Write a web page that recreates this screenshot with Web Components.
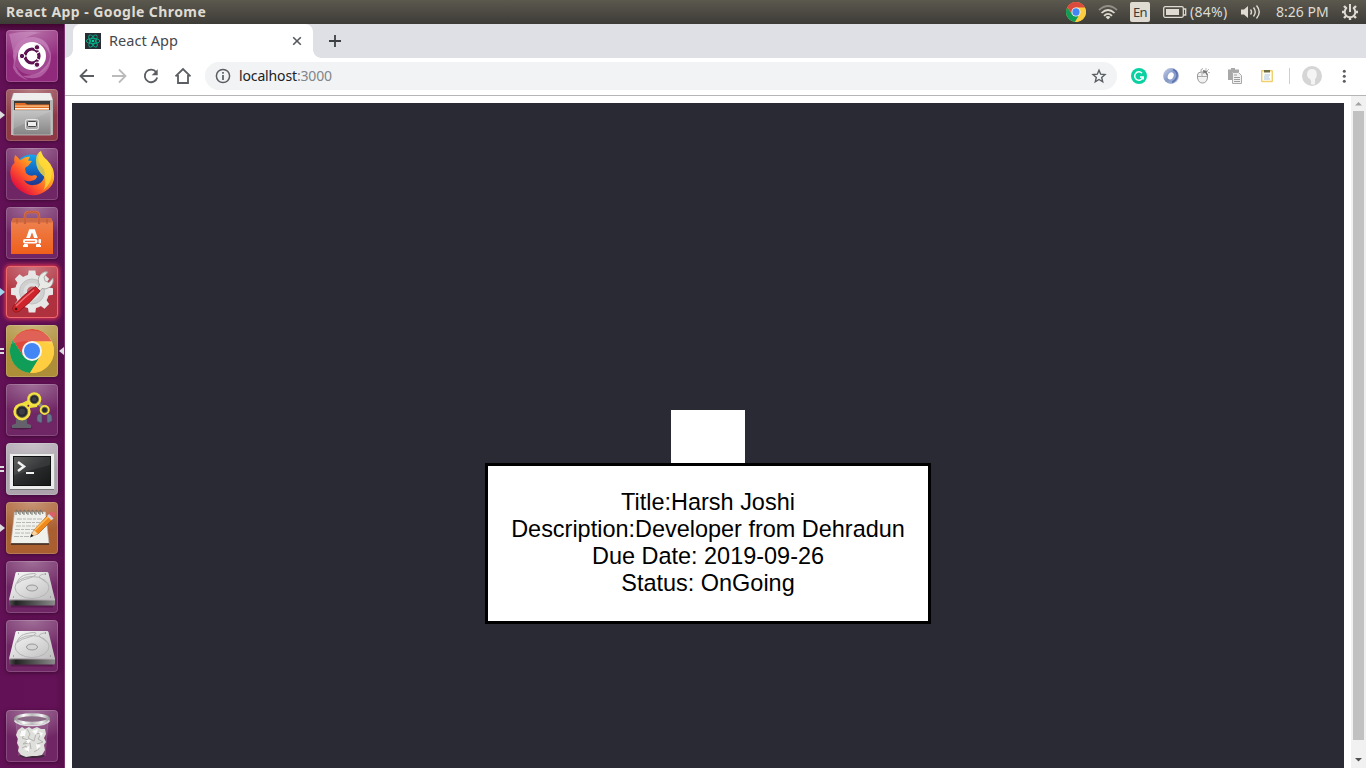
<!DOCTYPE html>
<html lang="en">
<head>
<meta charset="utf-8">
<title>React App</title>
<style>
html,body{margin:0;width:1366px;height:768px;overflow:hidden}
body{font-family:"Noto Sans","Open Sans",sans-serif}
</style>
</head>
<body>
<desk-shell>
  <top-panel slot="panel">React App - Google Chrome</top-panel>
  <dock-launcher slot="dock"></dock-launcher>
  <browser-window slot="window">
    <browser-tab slot="tab">React App</browser-tab>
    <tool-bar slot="toolbar"></tool-bar>
    <task-page slot="page">
      <task-card>
        <span>Title:Harsh Joshi</span>
        <span>Description:Developer from Dehradun</span>
        <span>Due Date: 2019-09-26</span>
        <span>Status: OnGoing</span>
      </task-card>
    </task-page>
    <scroll-bar slot="scroll"></scroll-bar>
  </browser-window>
</desk-shell>
<script>
const define = (name, html) => customElements.define(name, class extends HTMLElement {
  constructor() {
    super();
    this.attachShadow({mode: 'open'});
  }
  connectedCallback() {
    this.shadowRoot.innerHTML = typeof html === 'function' ? html(this) : html;
  }
});

const chromeBall = `
<circle cx="24" cy="24" r="22" fill="#fdd043"/>
<path d="M4.900 13A22 22 0 0 0 22 45.900L32.500 28.500 24 24 15.500 29Z" fill="#109d58"/>
<path d="M43.500 14.200H24V24L32.600 29 22 45.900A22 22 0 0 0 43.500 14.200Z" fill="#fecd40"/>
<path d="M4.900 13A22 22 0 0 1 43.600 14.200H24L15.400 29Z" fill="#dc4a3d"/>
<circle cx="24" cy="24" r="10" fill="#f5f5f5"/><circle cx="24" cy="24" r="8" fill="#4285f4"/>`;

const disk = `<defs><linearGradient id="d" x2="1" y2="1"><stop stop-color="#fafafa"/><stop offset="1" stop-color="#bdbdbd"/></linearGradient><linearGradient id="e"><stop stop-color="#555"/><stop offset=".15" stop-color="#222"/><stop offset="1" stop-color="#8b8b8b"/></linearGradient></defs>
<path d="M5 45h42" stroke="#2a0624" stroke-width="3" opacity=".35"/>
<path d="M11 11h30q1.200 0 1.500 1.200L49 38.500H3L9.500 12.200Q9.800 11 11 11Z" fill="url(#d)"/><path d="M3 38.500h46v4.500q0 1.500-1.500 1.500h-43Q3 44.500 3 43Z" fill="url(#e)"/><path d="M3 38.800h46" stroke="#eee" stroke-width=".8"/>
<ellipse cx="26" cy="26.500" rx="17" ry="11" fill="none" stroke="#b4b4b4"/><path d="M11 22Q13 15 21 13.500q9-2 9 0-3 3-8 4-6 1-11 5M40 13q-6 0-7 3l8 6" fill="none" stroke="#b5b5b5"/>
<ellipse cx="26" cy="27" rx="5.500" ry="3" fill="#d4d4d4" stroke="#999"/><path d="M7 36h1M44 36h1M12 13h1M39 13h1" stroke="#777"/>`;

const gearTeeth = [0,45,90,135,180,225,270,315].map(a => `<path d="m21.500 12 1.200-7.500h6.600l1.200 7.500Z" transform="rotate(${a} 26 25.500)"/>`).join('');

const paper = `<path d="m12 20 4-3 3 2 4-2 3 2 5-2 4 2 4 0 1 5-2 4 2 4-2 3 1 5-3 5-5 1-5 0-6 1-5-2-3-4 1-4-2-4 1-4-2-4Z" fill="#dfdfdc"/>
<path d="m14 22 5 2-3 4 6 2-5 4 7-1 1 6M21 19l3 5-2 4 6 3 2-7M29 23l6 1-3 5 5 3-6 2 2 5-5 3M16 38l4-2 2 6" fill="none" stroke="#aeaeac" stroke-width=".9"/>
<path d="m15 21 5-1-1 6-5 0ZM26 21l6-2-2 6ZM18 39l5-3 0 6ZM30 34l5 1-4 5ZM33 22l4 1-2 4ZM20 30l5 0-3 4Z" fill="#fbfbfb"/>`;

const appArt = {
  dash: `<circle cx="26" cy="26" r="19" fill="#b86aab" opacity=".45"/>
<path d="M3 4Q20 0 36 3 14 4 8 28 6 14 3 4ZM7 26Q12 6 28 7 44 9 44 26 40 12 26 12 12 13 9 33ZM44 20Q48 38 34 47 24 50 16 46 32 46 38 38 45 32 44 20ZM8 30Q10 44 22 50 12 48 7 38Z" fill="#e0addb" opacity=".38"/>
<circle cx="26" cy="26" r="14" fill="#fff"/><circle cx="26" cy="26" r="7" fill="none" stroke="#5e1150" stroke-width="3.200"/><path d="m26 26 10.500-6M26 26l10.500 6M26 26H14" stroke="#fff" stroke-width="1.200"/><circle cx="26" cy="26" r="5" fill="#fff"/><g fill="#5e1150" stroke="#fff"><circle cx="16" cy="26" r="2.700"/><circle cx="31" cy="17.300" r="2.700"/><circle cx="31" cy="34.700" r="2.700"/></g>`,
  files: `<defs><linearGradient id="f" x2="0" y2="1"><stop stop-color="#bcbcbc"/><stop offset="1" stop-color="#858585"/></linearGradient></defs>
<path d="M7 4h38l2 7v35H5V11Z" fill="#b5b5b5"/><path d="M8 4h36l2.500 7h-41Z" fill="#eee"/><path d="M8 12h36v12H8Z" fill="#3c3a38"/><path d="M9 14h10l2 1.500h22V21H9Z" fill="#e16b22"/><path d="M9 16.500h34v1.200H9z" fill="#f8c58c"/><path d="M9 19h34v1.500H9z" fill="#fff1df"/>
<path d="M7 21.500h38V46H7Z" fill="url(#f)" stroke="#cdcdcd" stroke-width=".7"/><path d="M7 22h38L7 40Z" fill="#fff" opacity=".12"/><rect x="19.500" y="30.500" width="13" height="10" rx="2" fill="#aaa" stroke="#e7e7e7"/><rect x="21.500" y="32.500" width="9" height="5" rx="1" fill="#eee" stroke="#444"/>`,
  firefox: `<defs><linearGradient id="g" x1=".85" y1=".05" x2=".15" y2=".8"><stop stop-color="#fff44f"/><stop offset=".35" stop-color="#ffb01f"/><stop offset=".7" stop-color="#ff582c"/><stop offset="1" stop-color="#e5153d"/></linearGradient><linearGradient id="b" x2="0" y2="1"><stop stop-color="#18a5f3"/><stop offset=".6" stop-color="#1058b5"/><stop offset="1" stop-color="#2a2e80"/></linearGradient></defs>
<circle cx="25" cy="23" r="16.500" fill="url(#b)"/>
<path d="M9 7q3 2 5 5l1-.5q4-3 9-3l-2 4 4 .5-4 5q-3 1-3 3l1 4q3 4 9 2l2 1q0 4-6 5-4 1-7-1 3 6 10 5 7 0 10-7 2-6-1-10-7-6-4-15 1-1 2-2 1 5 6 9 4 4 6 9 4 14-6 21Q28 52 15 43 3 35 4.500 22q1-5 4-7-1-4 .5-8Z" fill="url(#g)"/>
<path d="M30 12q0-6 4.500-9 0 5 7 10 5 7 4 16-1 7-8 13 3-6 1-13-9-7-8.500-17Z" fill="#ffdc38" opacity=".8"/>`,
  software: `<defs><linearGradient id="s" x2="0" y2="1"><stop stop-color="#ee8452"/><stop offset="1" stop-color="#ef5f1b"/></linearGradient></defs><path d="M7 11h38l2 4v32H5V15Z" fill="url(#s)"/><path d="M7 11h38l2 4.500H5Z" fill="#cd6a43"/><path d="M19 17V9q0-4 4-4h6q4 0 4 4v8" fill="none" stroke="#d86d48" stroke-width="2.500"/><path d="M19 17V9q0-4 4-4h6q4 0 4 4v8M11 12v5M41 12v5" fill="none" stroke="#b64c29" stroke-width=".7"/>
<path d="m19.500 38.500 5-14.500h3l5 14.500" fill="none" stroke="#fff" stroke-width="3.600"/><path d="M17 34h18" stroke="#ef6c38" stroke-width="6"/><path d="M17 39h5M30 39h5" stroke="#fff" stroke-width="2"/><rect x="17" y="32" width="14.500" height="4.500" rx="2" fill="#fff"/><rect x="32.500" y="32" width="2.500" height="4.500" rx="1" fill="#fff"/><path d="M19 34.300h10" stroke="#ef5f1b"/>`,
  settings: `<g fill="#e6e6e6">${gearTeeth}<circle cx="26" cy="25.500" r="17"/></g><circle cx="26" cy="25.500" r="12.500" fill="#cfcfcf" stroke="#c0c0c0"/><circle cx="26" cy="25.500" r="8.500" fill="#dedede"/><circle cx="26" cy="25.500" r="5" fill="#c0666a"/>
<path d="m29 26 4.500-7q-3-6 1-10.500Q38 4.500 42 6l-4 5 1 4 4 1.500L47 12q1 6-3 9-4 3-8 1.500L32 28Z" fill="#e9e9e6" stroke="#9b9b9b" stroke-width=".8"/><path d="m29.500 20.500 4.500 4.500q-9 11-21 20.500-4 2-6-1-1.500-3 1-5Q17 29 29.500 20.500Z" fill="#cf242b" stroke="#8c151b" stroke-width=".8"/><path d="M28 24Q18 32 10 40" stroke="#ec7073" stroke-width="1.500" fill="none"/><circle cx="10" cy="43" r="1.300" fill="#421012"/>`,
  chrome: `<g transform="translate(2 2)">${chromeBall}</g><path d="M5 19Q14-1 39 8q7 5 8 12-19-8-42-1Z" fill="#fff" opacity=".13"/>`,
  robot: `<ellipse cx="15.500" cy="44" rx="11" ry="1.500" fill="#281528" opacity=".5"/><path d="M10 35h11v4.500l4 1.500v3H6v-3l4-1.500Z" fill="#64616c"/><path d="m12 21 10-5 0-3 10 4-1 6-7 1-1 8Z" fill="#eddc3a"/><path d="m32 19 7 6" stroke="#85828a" stroke-width="3"/><circle cx="16" cy="27.700" r="8.700" fill="#f3e241"/><circle cx="28.300" cy="15.300" r="7" fill="#f3e241"/><circle cx="38.700" cy="26" r="5" fill="#f3e241"/><circle cx="22.300" cy="21.700" r="1" fill="#6c1d4e"/>
<g fill="#272831" stroke="#6b6748" stroke-width=".8"><circle cx="16" cy="27.700" r="5.700"/><circle cx="28.300" cy="15.300" r="4.300"/><circle cx="38.700" cy="26" r="2.800"/></g><g fill="#3c3d45"><circle cx="16" cy="27.700" r="3"/><circle cx="28.300" cy="15.300" r="2.200"/></g><path d="M36 30q-4-1-5 3v4l4 2 1-1ZM41 30q4-1 5 3v4l-4 2-1-1Z" fill="#68738c" stroke="#454b62" stroke-width=".6"/>`,
  terminal: `<defs><linearGradient id="t" x2="1" y2="1"><stop stop-color="#555"/><stop offset=".5" stop-color="#292b2c"/><stop offset="1" stop-color="#171919"/></linearGradient></defs><rect x="3.500" y="10.500" width="45" height="36" rx="1" fill="#ececec" stroke="#b5b5b5"/><path d="M4 46.500h44" stroke="#777"/><rect x="7.500" y="13.500" width="37" height="29" fill="url(#t)" stroke="#111"/><path d="M8 14h36v8L8 32Z" fill="#fff" opacity=".07"/><path d="m12 19 6 4.500-6 4.500" fill="none" stroke="#f2f2f2" stroke-width="2.500"/><path d="M20 30h8" stroke="#f2f2f2" stroke-width="2"/>`,
  editor: `<path d="M8.500 10h31l3.500 31.500H5Z" fill="#f0f0ec" stroke="#bbb" stroke-width=".6"/><path d="M5 42h38" stroke="#3a2920" stroke-width="1.600"/><g fill="none" stroke="#b0b0ae" stroke-width=".9" stroke-dasharray="5 1 3 1"><path d="M11 17h25M10 20.500h24M10 24h21M9 27.500h22M9 31h18M8 34.500h15"/></g><g fill="none" stroke="#74746f" stroke-width="1"><path d="M10 13V8q2 0 3 4M14 13V8q2 0 3 4M18 13V8q2 0 3 4M22 13V8q2 0 3 4M26 13V8q2 0 3 4M30 13V8q2 0 3 4M34 13V8q2 0 3 4"/></g>
<path d="m25 34 3-6 14-15 4.500 4.500L32 32Z" fill="#f08a1d" stroke="#aa5714" stroke-width=".7"/><path d="m29 28 14-14" stroke="#ffbd59" stroke-width="1.600"/><path d="m42 13 3-3q3-1 4.500 1.500 0 2.500-3 5Z" fill="#dc606a"/><path d="m41 14 4.500 4.500 2-2L43 12Z" fill="#d6d8da"/><path d="m25 34 3-6 4 4Z" fill="#f5d8a7"/><path d="m24 35.500 1.500-3.500 2 2Z" fill="#111"/>`,
  disk,
  trash: `<defs><linearGradient id="r"><stop stop-color="#999"/><stop offset=".25" stop-color="#fff"/><stop offset=".5" stop-color="#bbb"/><stop offset=".8" stop-color="#f5f5f5"/><stop offset="1" stop-color="#999"/></linearGradient></defs><path d="m10 12 3 34q13 3 26 0l3-34Z" fill="#b085aa" opacity=".3" stroke="#d5bcd1" stroke-width=".8"/><ellipse cx="26" cy="46" rx="13" ry="2" fill="#40273d"/>
${paper}
<ellipse cx="26" cy="9" rx="16.500" ry="4.200" fill="#8b6a86" stroke="url(#r)" stroke-width="3"/><path d="M8.500 10.500q3 5 17.500 5t17.500-5" fill="none" stroke="#ddd" stroke-width="1.600"/>`
};

define('app-tile', el => `<style>
:host{display:block;position:relative;width:52px;height:52px;flex:none;border-radius:4px;background:radial-gradient(ellipse 48px 30px at 50% 0,rgba(255,255,255,.36),rgba(255,255,255,.03)),var(--tint,#6b1f5f);box-shadow:inset 0 0 0 1px rgba(255,255,255,.17),0 1px 4px rgba(20,0,18,.5)}
:host([glow]){box-shadow:inset 0 0 0 1px #f0696d,0 0 4px 1px #e63a4b}
svg{display:block}
i{position:absolute;top:22px;left:-6px;width:0;height:0;border:4.500px solid transparent;border-left:5px solid #ddd;border-right:0}
i.blue{border-left-color:#9ed3ec}
i.two{top:23px;width:4px;height:2px;border:0;background:#ddd;box-shadow:0 4px #ddd}
b{position:absolute;top:22px;left:53px;border:4.500px solid transparent;border-right:5px solid #ddd;border-left:0}
</style><svg width="52" height="52" viewBox="0 0 52 52">${appArt[el.getAttribute('app')]}</svg>${el.hasAttribute('mark') ? `<i class="${el.getAttribute('mark')}"></i>` : ''}${el.hasAttribute('active') ? '<b></b>' : ''}`);

define('dock-launcher', `<style>
:host{display:flex;flex-direction:column;gap:7px;box-sizing:border-box;width:65px;height:744px;padding:6px 0 6px 6px;background:linear-gradient(#40052f,transparent 8px),linear-gradient(90deg,#631156,#641257 85%,#560e4a);border-right:1px solid #7d3370}
app-tile:last-child{margin-top:auto}
</style>
<app-tile app="dash" style="--tint:#8e2378"></app-tile>
<app-tile app="files" mark="one" style="--tint:#8a3440"></app-tile>
<app-tile app="firefox"></app-tile>
<app-tile app="software"></app-tile>
<app-tile app="settings" mark="blue" glow style="--tint:#ad2a38"></app-tile>
<app-tile app="chrome" mark="two" active style="--tint:#ab8b32"></app-tile>
<app-tile app="robot"></app-tile>
<app-tile app="terminal" mark="two" style="--tint:#aaa0aa"></app-tile>
<app-tile app="editor" mark="one" style="--tint:#a75a2a"></app-tile>
<app-tile app="disk"></app-tile>
<app-tile app="disk"></app-tile>
<app-tile app="trash"></app-tile>`);

define('top-panel', `<style>
:host{display:flex;align-items:center;box-sizing:border-box;height:24px;padding-left:6px;background:linear-gradient(#5b584e,#3d3c37);color:#dfdbd2;font-size:14px;line-height:24px;white-space:nowrap}
.title{font:bold 14px/24px "Noto Sans",sans-serif;width:200px;letter-spacing:.43px;margin-right:860px}
svg{display:block;flex:none}
.kb{box-sizing:border-box;width:20px;height:20px;margin:0 13px 0 12px;border-radius:2px;background:#dfdbd2;color:#3c3b37;text-align:center;font-size:13px;line-height:20px;letter-spacing:-.6px}
.pct{width:39px;margin:0 12px 0 3px;letter-spacing:.3px}
.time{width:53px;margin:0 13px 0 15px;font-size:14px;letter-spacing:0}
</style>
<span class="title"><slot></slot></span>
<svg width="20" height="20" viewBox="2 2 44 44">${chromeBall}</svg>
<svg style="margin-left:12px" width="20" height="16" viewBox="0 0 20 16" fill="none" stroke="#dfdbd2" stroke-width="1.700"><path d="M1 6q9-8 18 0" opacity=".45"/><path d="M3.500 9q6.500-6 13 0M6 11.800q4-4 8 0"/><path d="m7.500 13 2.500 2.500 2.500-2.500q-2.500-2-5 0Z" fill="#dfdbd2" stroke="none"/></svg>
<span class="kb">En</span>
<svg width="24" height="14" viewBox="0 0 24 14"><rect x=".7" y="1.700" width="19.600" height="10.600" rx="1.500" fill="none" stroke="#dfdbd2" stroke-width="1.300"/><path d="M3 4h13v6H3z" fill="#dfdbd2"/><path d="M20.500 4h2.200v6h-2.200" fill="none" stroke="#dfdbd2" stroke-width="1.300"/></svg>
<span class="pct">(84%)</span>
<svg width="20" height="16" viewBox="0 0 20 16"><path d="M0 5.500h3L7 2v12l-4-3.500H0Z" fill="#dfdbd2"/><path d="M9.500 5.500q2 2.500 0 5M12.500 3.500q3.500 4.500 0 9M15.500 1.500q5.500 6.500 0 13" fill="none" stroke="#dfdbd2" stroke-width="1.400"/></svg>
<span class="time">8:26 PM</span>
<svg width="16" height="18" viewBox="-8 -9 16 18"><g stroke="#dfdbd2" fill="none"><path d="M-3.200-4.200A5.300 5.300 0 1 0 3.200-4.200" stroke-width="2"/><path d="M0-8v8" stroke-width="2"/><path d="M-8 0h3M5 0h3M0 5v3M-6-6l2.500 2.500M6-6 3.500-3.500M-6 6l2.500-2.500M6 6 3.500 3.500" stroke-width="2.400"/></g></svg>`);

define('browser-tab', `<style>
:host{position:relative;display:flex;align-items:center;box-sizing:border-box;width:240px;height:34px;padding:0 11px 0 12px;background:#fff;border-radius:8px 8px 0 0;color:#45484c;font-size:14.500px}
:host::before,:host::after{content:"";position:absolute;bottom:0;width:8px;height:8px;background:radial-gradient(circle at 0 0,transparent 7.500px,#fff 8px)}
:host::before{left:-8px}
:host::after{right:-8px;transform:scaleX(-1)}
span{flex:1;margin-left:8px;padding-bottom:2px;letter-spacing:.06px}
</style>
<svg width="16" height="16" viewBox="-8 -8 16 16"><path d="M-8-8H8V8H-8z" fill="#282c34"/><g fill="none" stroke="#00b68c" stroke-width=".9"><ellipse rx="6.800" ry="2.600"/><ellipse rx="6.800" ry="2.600" transform="rotate(60)"/><ellipse rx="6.800" ry="2.600" transform="rotate(120)"/></g><circle r="1.300" fill="#00d8a0"/></svg>
<span><slot></slot></span>
<svg width="10" height="10" viewBox="0 0 10 10"><path d="m1.200 1.200 7.600 7.600m0-7.600L1.200 8.800" stroke="#55585c" stroke-width="1.600"/></svg>`);

define('tool-bar', `<style>
:host{display:flex;align-items:center;box-sizing:border-box;height:38px;padding:0 12px 1px 12px;background:#fff;border-bottom:1px solid #b6b4b6}
svg{display:block;flex:none;width:20px;height:20px;fill:none;stroke:#5a5d61;stroke-width:1.800}
.nav{display:flex;gap:12px}
.url{display:flex;align-items:center;box-sizing:border-box;width:912px;height:28px;margin-left:12px;padding:0 8px;border-radius:14px;background:#f1f3f4;font-size:14px;color:#202124}
.url span{flex:1;margin-left:6px;padding-bottom:2px;letter-spacing:-.14px}
.url em{font-style:normal;color:#80868b}
.ext{display:flex;gap:12px;margin-left:12px}
hr{width:1px;height:16px;border:0;margin:0 12px;background:#ccced1}
</style>
<div class="nav">
<svg viewBox="0 0 20 20"><path d="M17 10H4M10 3.500 3.500 10l6.500 6.500"/></svg>
<svg viewBox="0 0 20 20" style="stroke:#bbb"><path d="M3 10h13M10 3.500l6.500 6.500-6.500 6.500"/></svg>
<svg viewBox="0 0 20 20"><path d="M15.200 6.200A6.300 6.300 0 1 0 16.200 11.500"/><path d="M16.700 3.200v6h-6Z" fill="#5a5d61" stroke="none"/></svg>
<svg viewBox="0 0 20 20"><path d="M2.500 10.300 10 3l7.500 7.300M5 9v8h10V9"/></svg>
</div>
<div class="url"><svg viewBox="0 0 20 20" style="stroke-width:1.500"><circle cx="10" cy="10" r="6.600"/><path d="M10 9v5M10 6v1.700" stroke-width="1.700"/></svg>
<span>localhost<em>:3000</em></span>
<svg viewBox="0 0 20 20" style="stroke-width:1.400"><path d="m10 4.200 1.700 4 4.300.4-3.300 2.900 1 4.300-3.700-2.300-3.700 2.300 1-4.300L4 8.600l4.300-.4Z"/></svg></div>
<div class="ext">
<svg viewBox="0 0 20 20"><circle cx="10" cy="10" r="8" fill="#0bd0a2" stroke="none"/><path d="M13 7.200A4.200 4.200 0 1 0 14 11h-3M14.200 10.500v3" stroke="#fff" stroke-width="1.500"/></svg>
<svg viewBox="0 0 20 20"><defs><linearGradient id="o" x2="1" y2="1"><stop stop-color="#c9d3e9"/><stop offset=".5" stop-color="#8397c6"/><stop offset="1" stop-color="#b4c2e0"/></linearGradient></defs><circle cx="10" cy="10" r="7.900" fill="url(#o)"  stroke="none"/><ellipse cx="9.700" cy="10" rx="2.800" ry="3.800" fill="#fff" stroke="none" transform="rotate(25 10 10)"/><path d="M12 3.500q5 2 4 7-1 4-5 6" stroke="#5b74b0" stroke-width="1.600"/></svg>
<svg viewBox="0 0 20 20"><path d="M4.500 9q0-3 4-3h3q3 0 3 4v2q-1 5-5 5t-5-5Z" fill="#f1f1f1" stroke="#999" stroke-width="1"/><path d="M5 10.500h9M9 6v4" stroke="#999" stroke-width=".8"/><path d="M8 6Q7 3 10 2.500" stroke="#aaa" stroke-width="1"/><path d="m10 4 5 1-1.500 1L15 9l-1 .5-2-3L10.500 8Z" fill="#777" stroke="none"/><path d="M13 2v2m3-1-2 2m3 1.500h-2" stroke="#aaa" stroke-width=".8"/></svg>
<svg viewBox="0 0 20 20"><path d="M3 3.500h3V2h4v1.500h4V6H7v8H3Z" fill="#a8a8a8" stroke="none"/><path d="M7.500 6.500h6l3 3v8h-9Z" fill="#f0f0f0" stroke="#aaa" stroke-width="1"/><path d="M9 9h3M9 11.500h6M9 13.500h6M9 15.500h6" stroke="#959595" stroke-width=".9"/></svg>
<svg viewBox="0 0 20 20"><rect x="4.700" y="4.700" width="10.600" height="10.800" rx=".5" fill="#fffef3" stroke="#f0cf70" stroke-width="1.400"/><path d="M7 4h6v2.500H7z" fill="#716e45" stroke="none"/><path d="M7.500 9H13M7 11h5M7 13h6" stroke="#a9c5ee" stroke-width="1.200"/></svg>
</div><hr>
<svg viewBox="0 0 20 20"><circle cx="10" cy="10" r="10" fill="#d5d5d5" stroke="none"/><path d="M10 3q4.500 0 4.800 5 0 4-1.800 5l0 5q-2 1-4 0 1-3-1-5-3-1-3-5 .5-5 5-5Z" fill="#f4f4f4" stroke="none"/></svg>
<svg viewBox="0 0 20 20" style="margin-left:12px"><g fill="#5a5d61" stroke="none"><circle cx="10.300" cy="5.200" r="1.500"/><circle cx="10.300" cy="10.200" r="1.500"/><circle cx="10.300" cy="15.200" r="1.500"/></g></svg>`);

define('task-card', `<style>
:host{display:flex;flex-direction:column;align-items:center;box-sizing:border-box;width:446px;height:161px;padding:23px 0;border:3px solid #000;background:#fff;color:#000;font:23.460px/27px "Liberation Sans",Arial,sans-serif;white-space:nowrap}
</style><slot></slot>`);

define('task-page', `<style>
:host{display:flex;flex-direction:column;align-items:center;flex:1;min-width:0;box-sizing:border-box;margin:7px 7px 0;padding-top:307px;background:#2a2a35}
.blank{width:74px;height:53px;background:#fff}
</style><div class="blank"></div><slot></slot>`);

define('scroll-bar', `<style>
:host{display:flex;flex-direction:column;align-items:center;width:15px;background:#f1f1f1}
svg{display:block;width:15px;height:15px;flex:none}
.thumb{width:11px;height:629px;background:#c1c1c1}
svg:last-child{margin-top:12px}
</style><svg viewBox="0 0 15 15"><path d="m4 9.500 3.500-3.500 3.500 3.500Z" fill="#a3a3a3"/></svg><div class="thumb"></div><svg viewBox="0 0 15 15"><path d="m4 6 3.500 3.500L11 6Z" fill="#505050"/></svg>`);

define('browser-window', `<style>
:host{display:flex;flex-direction:column;flex:1;min-width:0;height:744px;background:#fff}
.strip{display:flex;align-items:center;height:34px;padding-left:8px;background:#dee0e6}
.strip svg{margin-left:16px}
.body{display:flex;flex:1;min-height:0}
</style>
<div class="strip"><slot name="tab"></slot><svg width="12" height="12" viewBox="0 0 12 12"><path d="M0 6h12M6 0v12" stroke="#3c4043" stroke-width="1.800"/></svg></div>
<slot name="toolbar"></slot>
<div class="body"><slot name="page"></slot><slot name="scroll"></slot></div>`);

define('desk-shell', `<style>
:host{display:flex;flex-direction:column;width:1366px;height:768px;overflow:hidden}
.row{display:flex;height:744px}
</style><slot name="panel"></slot><div class="row"><slot name="dock"></slot><slot name="window"></slot></div>`);
</script>
</body>
</html>
